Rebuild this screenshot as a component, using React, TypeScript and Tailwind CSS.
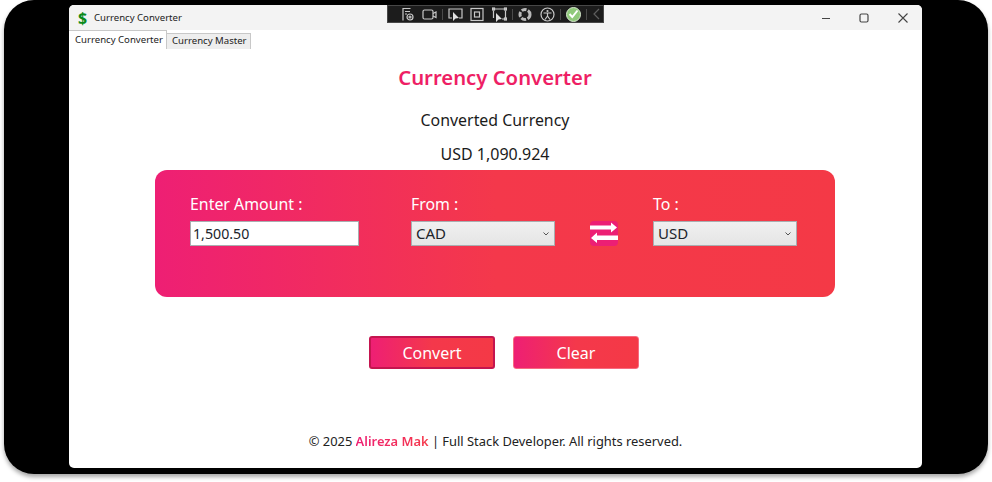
import React from "react";

const font = "font-['Noto_Sans','Open_Sans',sans-serif]";
const grad = "bg-[linear-gradient(90deg,#ee1f74_0%,#f4384b_50%,#f43946_100%)]";

function SelectBox({ value }: { value: string }) {
  return (
    <div className="w-[144px] h-[25px] flex items-center justify-between pl-[4px] pr-[5px] border border-[#a9adb0] bg-[linear-gradient(180deg,#f0f0f0,#e5e5e5)] text-[15px] leading-none text-[#20242a]">
      <span>{value}</span>
      <svg width="6" height="4" viewBox="0 0 6 4"><path d="M0.5 0.5 L3 3 L5.5 0.5" fill="none" stroke="#555" strokeWidth="1" /></svg>
    </div>
  );
}

function Field({ label, children, className }: { label: string; children: React.ReactNode; className?: string }) {
  return (
    <div className={`flex flex-col gap-[6px] ${className ?? ""}`}>
      <div className="h-[21px] text-[15.9px] leading-[21px] text-white">{label}</div>
      {children}
    </div>
  );
}

function Ico({ children, w = 15 }: { children: React.ReactNode; w?: number }) {
  return (
    <svg width={w} height="15" viewBox={`0 0 ${w} 15`} fill="none" stroke="#c9c9c9" strokeWidth="1.2" className="shrink-0">
      {children}
    </svg>
  );
}

const Sep = () => <div className="w-px h-[11px] bg-[#4a4a4a] shrink-0" />;

function Toolbar() {
  return (
    <div className="absolute left-[387px] top-[5px] w-[217px] h-[18px] bg-[#1c1c1c] border border-[#474747] flex items-center pl-[12px] text-[#cfcfcf]">
      <div className="w-[7px] h-[14px] -ml-[11px] bg-[radial-gradient(#666_35%,transparent_40%)] bg-[length:2px_2px] shrink-0" />
      <div className="ml-[4px] flex items-center">
        <Ico><path d="M3 13.5V1.5H10.5M5 4.5H10M5 7H7" /><circle cx="10" cy="10" r="3" /><circle cx="10" cy="10" r="1" /></Ico>
        <div className="w-[7px]" />
        <Ico><rect x="1" y="3" width="10" height="9" rx="1.5" /><path d="M11 6.5 L14 5 V10.5 L11 9" /></Ico>
        <div className="w-[5px]" />
        <Sep />
        <div className="w-[5px]" />
        <Ico><path d="M4 11H1V2H14V11H11" /><path d="M5 5 L5 14 L7.5 11.5 L11 11 Z" fill="#e0e0e0" stroke="none" /></Ico>
        <div className="w-[7px]" />
        <Ico><rect x="1" y="1.5" width="12" height="12" /><rect x="4.5" y="5" width="5" height="5" /></Ico>
        <div className="w-[7px]" />
        <Ico><path d="M3 2H12M1.5 3.5V11M13.5 3.5V11M10 12H13" /><rect x="0.5" y="1" width="2" height="2" /><rect x="12.5" y="1" width="2" height="2" /><rect x="12.5" y="11" width="2" height="2" /><path d="M4 6 L4 15 L6.5 12.5 L10 12 Z" fill="#e0e0e0" stroke="none" /></Ico>
        <div className="w-[5px]" />
        <Sep />
        <div className="w-[5px]" />
        <Ico w={14}><circle cx="7" cy="7.5" r="5" strokeWidth="3" strokeDasharray="5 1.5" stroke="#b8b8b8" /><path d="M5 10 L9 5" stroke="#1c1c1c" /></Ico>
        <div className="w-[8px]" />
        <Ico><circle cx="7.5" cy="7.5" r="6.5" /><circle cx="7.5" cy="4" r="1.1" fill="#c9c9c9" stroke="none" /><path d="M3.5 6 H11.5 M7.5 6 V9 M7.5 9 L5 12.5 M7.5 9 L10 12.5" /></Ico>
        <div className="w-[5px]" />
        <Sep />
        <div className="w-[5px]" />
        <div className="w-[15px] h-[15px] rounded-full bg-[#8fc97a] border border-[#d8e8cf] flex items-center justify-center shrink-0">
          <svg width="11" height="10" viewBox="0 0 11 10"><path d="M1.5 5 L4.3 8 L9.5 1.5" fill="none" stroke="#fff" strokeWidth="2" /></svg>
        </div>
        <div className="w-[5px]" />
        <Sep />
        <div className="w-[6px]" />
        <svg width="7" height="12" viewBox="0 0 7 12" className="shrink-0"><path d="M6 1 L1 6 L6 11" fill="none" stroke="#5e5e5e" strokeWidth="1.2" /></svg>
      </div>
    </div>
  );
}

export default function App() {
  return (
    <div className={`relative w-[992px] h-[482px] bg-white overflow-hidden ${font}`}>
      <div className="ml-[4px] w-[984px] h-[474px] bg-black rounded-[30px] pt-[5px] pl-[65px] shadow-[0_3px_4px_rgba(0,0,0,0.35)]">
        <div className="w-[853px] h-[463px] bg-white rounded-[5px] overflow-hidden flex flex-col">
          <div className="h-[25px] shrink-0 bg-[#f3f3f3] flex items-center pl-[8px]">
            <span className="w-[11px] text-center text-[#0a8a1a] text-[16px] font-bold leading-none">$</span>
            <span className="ml-[6px] mt-[1px] text-[9.6px] text-[#222]">Currency Converter</span>
            <div className="ml-auto flex items-center pr-[14px]">
              <svg width="10" height="10" viewBox="0 0 10 10"><path d="M1 5.5H9" stroke="#444" strokeWidth="1.2" /></svg>
              <svg width="10" height="10" viewBox="0 0 10 10" className="ml-[28px]"><rect x="1" y="1" width="8" height="8" rx="1.5" fill="none" stroke="#444" strokeWidth="1.2" /></svg>
              <svg width="10" height="10" viewBox="0 0 10 10" className="ml-[29px]"><path d="M0.5 0.5L9.5 9.5M9.5 0.5L0.5 9.5" stroke="#444" strokeWidth="1.1" /></svg>
            </div>
          </div>
          <div className="h-[19px] shrink-0 flex items-end text-[9.6px] text-[#222]">
            <div className="h-[19px] w-[98px] pl-[6px] border-t border-r border-[#c8c8c8] flex items-center bg-white">Currency Converter</div>
            <div className="h-[16px] w-[84px] pl-[5px] border border-l-0 border-b-0 border-[#c8c8c8] flex items-center bg-[#eeeeee]">Currency Master</div>
          </div>
          <div className="flex-1 flex flex-col items-center pr-[1px]">
            <h1 className="mt-[13px] h-[30px] text-[20.3px] leading-[30px] font-semibold text-[#ee1f65]">Currency Converter</h1>
            <p className="mt-[16px] h-[24px] text-[15.9px] leading-[24px] text-[#1b1b1b]">Converted Currency</p>
            <p className="mt-[10px] h-[24px] text-[16px] leading-[24px] text-[#1b1b1b]">USD 1,090.924</p>
            <div className={`mt-[4px] w-[680px] h-[127px] rounded-[12px] ${grad} flex items-start pt-[24px] pl-[35px]`}>
              <Field label="Enter Amount :">
                <div className="w-[169px] h-[25px] bg-white border border-[#a9adb0] pl-[2px] flex items-center text-[14.2px] text-[#20242a]">1,500.50</div>
              </Field>
              <Field label="From :" className="ml-[52px]"><SelectBox value="CAD" /></Field>
              <div className="ml-[35px] mt-[27px] w-[28px] h-[25px] rounded-[4px] bg-[#ec1f74] overflow-hidden">
                <svg width="28" height="25" viewBox="0 0 28 25">
                  <path d="M0 4.5H21V1.5L27 6.5L21 11.5V8.5H0Z" fill="#fff" />
                  <path d="M28 14.5H7V11.5L1 17L7 22V19H28Z" fill="#fff" />
                </svg>
              </div>
              <Field label="To :" className="ml-[35px]"><SelectBox value="USD" /></Field>
            </div>
            <div className="mt-[39px] ml-[18px] flex gap-[18px]">
              <button className={`w-[126px] h-[33px] rounded-[3px] ${grad} border-2 border-[#c4154f] text-white text-[16px]`}>Convert</button>
              <button className={`w-[126px] h-[33px] rounded-[3px] ${grad} border border-[#f76a80] text-white text-[16px]`}>Clear</button>
            </div>
            <p className="mt-[63px] ml-[1px] text-[12.9px] leading-[18px] text-[#222]">
              © 2025 <span className="font-semibold text-transparent bg-clip-text bg-[linear-gradient(90deg,#ee1f74,#f5394a)]">Alireza Mak</span> | Full Stack Developer. All rights reserved.
            </p>
          </div>
        </div>
      </div>
      <Toolbar />
    </div>
  );
}
